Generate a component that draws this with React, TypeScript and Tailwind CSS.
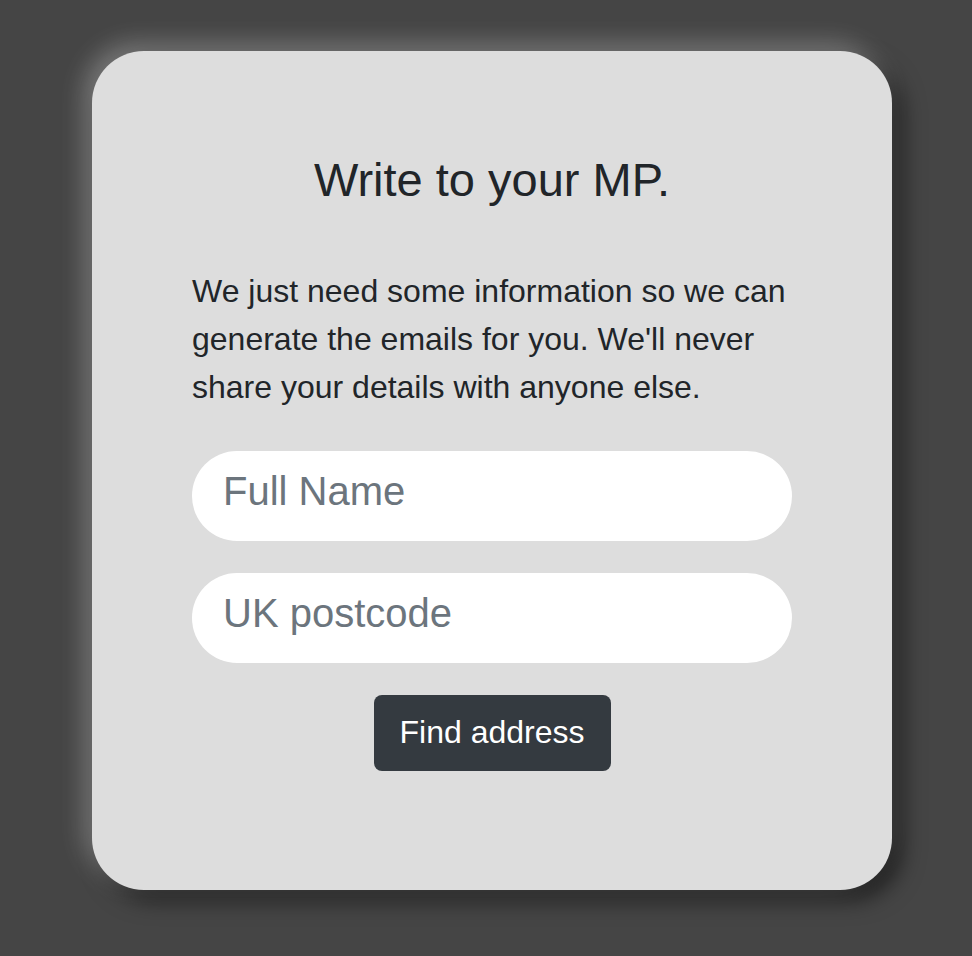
export default function App() {
  return (
    <div
      className="min-h-[956px] w-full bg-[#454545] pt-[51px] pl-[92px]"
      style={{ fontFamily: '"Liberation Sans", Arial, sans-serif' }}
    >
      <div className="w-[800px] h-[839px] rounded-[52px] bg-[#dddddd] shadow-[-8px_-8px_24px_rgba(255,255,255,0.28),10px_10px_22px_rgba(0,0,0,0.55)] px-[100px] pt-[101px]">
        <h1 className="text-center text-[47px] leading-[55px] text-[#212529]">
          Write to your MP.
        </h1>
        <p className="mt-[60px] text-[32px] leading-[48px] text-[#212529]">
          We just need some information so we can generate the emails for you. We'll never share your details with anyone else.
        </p>
        <form className="mt-[40px] flex flex-col gap-[32px]" onSubmit={(e) => e.preventDefault()}>
          <input
            type="text"
            placeholder="Full Name"
            className="h-[90px] w-full rounded-full bg-white px-[31px] pb-[10px] text-[40px] text-[#212529] placeholder:text-[#6c757d] outline-none"
          />
          <input
            type="text"
            placeholder="UK postcode"
            className="h-[90px] w-full rounded-full bg-white px-[31px] pb-[10px] text-[40px] text-[#212529] placeholder:text-[#6c757d] outline-none"
          />
          <div className="flex justify-center">
            <button
              type="submit"
              className="h-[76px] w-[237px] rounded-[8px] bg-[#343a40] pb-[2px] text-[32px] leading-[48px] text-white"
            >
              Find address
            </button>
          </div>
        </form>
      </div>
    </div>
  );
}
